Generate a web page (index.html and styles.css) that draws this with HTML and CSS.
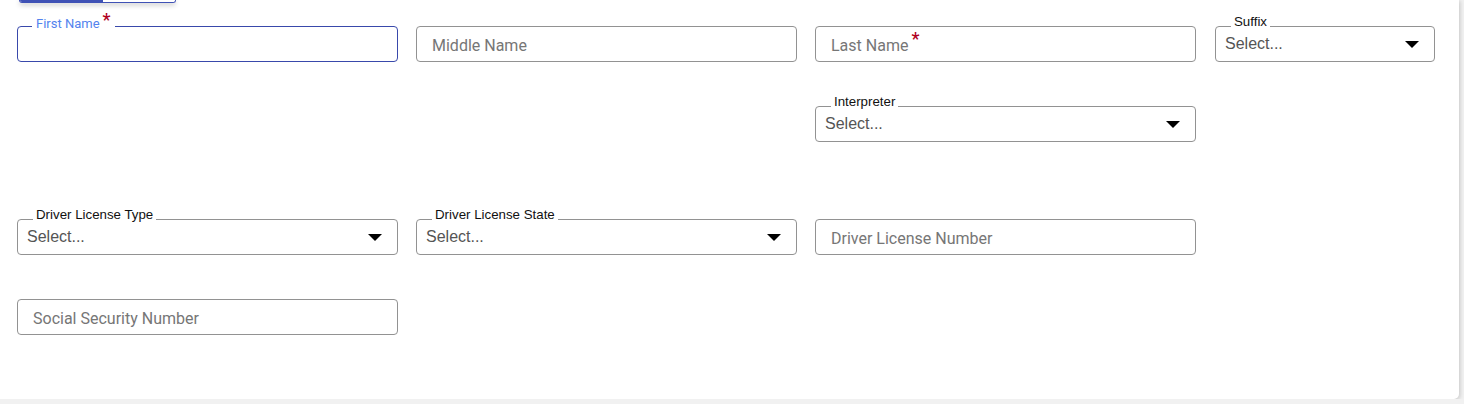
FILE: index.html
```html
<!DOCTYPE html>
<html lang="en">
<head>
    <meta charset="UTF-8">
    <meta name="viewport" content="width=device-width, initial-scale=1.0">
    <title>Person Details</title>
    <link rel="stylesheet" href="styles.css">
</head>
<body>
    <div class="card">
        <div class="toggle">
            <span class="toggle-on"></span>
            <span class="toggle-off"></span>
        </div>
        <form class="person-form">
            <div class="row">
                <div class="field focused">
                    <label class="float-label">First Name<span class="req">*</span></label>
                    <div class="box"></div>
                </div>
                <div class="field">
                    <div class="box"><span class="placeholder">Middle Name</span></div>
                </div>
                <div class="field">
                    <div class="box"><span class="placeholder">Last Name</span><span class="req req-inline">*</span></div>
                </div>
                <div class="field suffix">
                    <label class="select-label">Suffix</label>
                    <div class="box select"><span class="select-text">Select...</span><span class="caret"></span></div>
                </div>
            </div>
            <div class="row row-tall">
                <div class="field empty"></div>
                <div class="field empty"></div>
                <div class="field">
                    <label class="select-label">Interpreter</label>
                    <div class="box select"><span class="select-text">Select...</span><span class="caret"></span></div>
                </div>
            </div>
            <div class="row">
                <div class="field">
                    <label class="select-label">Driver License Type</label>
                    <div class="box select"><span class="select-text">Select...</span><span class="caret"></span></div>
                </div>
                <div class="field">
                    <label class="select-label">Driver License State</label>
                    <div class="box select"><span class="select-text">Select...</span><span class="caret"></span></div>
                </div>
                <div class="field">
                    <div class="box"><span class="placeholder">Driver License Number</span></div>
                </div>
            </div>
            <div class="row row-last">
                <div class="field">
                    <div class="box"><span class="placeholder">Social Security Number</span></div>
                </div>
            </div>
        </form>
    </div>
</body>
</html>
```

FILE: styles.css
```css
body {
    margin: 0;
    padding: 0;
    background-color: #f1f1f1;
    font-family: Roboto, "Liberation Sans", Arial, sans-serif;
}
.card {
    width: 1459px;
    height: 399px;
    background-color: #ffffff;
    border-radius: 0 0 5px 0;
    box-shadow: 1px 1px 4px rgba(0, 0, 0, 0.18);
    overflow: hidden;
}
.toggle {
    display: flex;
    width: 155px;
    height: 2px;
    margin-left: 19px;
    border: 1px solid #3f51b5;
    border-top: none;
    border-radius: 0 0 4px 4px;
    overflow: hidden;
    box-shadow: 0 2px 5px rgba(0, 0, 0, 0.25);
}
.toggle-on {
    width: 83px;
    background-color: #3f51b5;
}
.toggle-off {
    flex: 1;
    background-color: #ffffff;
}
.person-form {
    padding: 23px 0 0 17px;
}
.row {
    display: grid;
    grid-template-columns: 381px 381px 381px 221px;
    column-gap: 18px;
    margin-bottom: 44px;
}
.row-tall {
    margin-bottom: 77px;
}
.row-last {
    margin-bottom: 0;
}
.field {
    position: relative;
    height: 36px;
}
.suffix {
    margin-left: 1px;
}
.box {
    box-sizing: border-box;
    height: 36px;
    border: 1px solid #929292;
    border-radius: 4px;
    display: flex;
    align-items: center;
    padding: 2px 16px 0 15px;
}
.focused .box {
    border-color: #3949ab;
}
.placeholder {
    font-size: 16px;
    color: #767676;
}
.float-label {
    position: absolute;
    top: -9px;
    left: 15px;
    padding: 0 4px;
    background-color: #ffffff;
    font-size: 13px;
    line-height: 14px;
    color: #5383ee;
}
.req {
    color: #b0001e;
    font-size: 18px;
    font-weight: 500;
    line-height: 0;
    margin-left: 3px;
    vertical-align: 2px;
}
.req-inline {
    margin-left: 3px;
    vertical-align: 0;
    position: relative;
    top: -6px;
}
.select-label {
    position: absolute;
    top: -11px;
    left: 16px;
    padding: 0 3px;
    background-color: #ffffff;
    font-family: "Liberation Sans", Arial, sans-serif;
    font-size: 13.3px;
    line-height: 14px;
    color: #111111;
}
.select {
    padding: 0 15px 0 9px;
    justify-content: space-between;
}
.select-text {
    font-family: "Liberation Sans", Arial, sans-serif;
    font-size: 16px;
    color: #555555;
}
.caret {
    width: 0;
    height: 0;
    border-left: 7px solid transparent;
    border-right: 7px solid transparent;
    border-top: 7px solid #000000;
    margin-top: 1px;
}
```
